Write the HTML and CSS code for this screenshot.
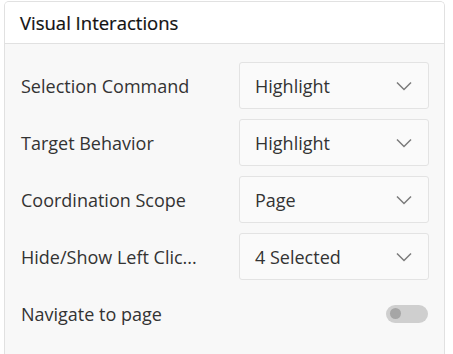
FILE: index.html
```html
<!DOCTYPE HTML>
<html lang="en-US">
<head>
    <title>Visual Interactions</title>
    <meta charset="UTF-8">
    <link rel="stylesheet" href="styles.css">
</head>
<body>
<div class="panel">
    <div class="panel-header">Visual Interactions</div>
    <div class="panel-body">
        <div class="row">
            <span class="label">Selection Command</span>
            <div class="select"><span>Highlight</span><svg class="chevron" viewBox="0 0 16 10"><path d="M1 1.5 L8 8.5 L15 1.5"/></svg></div>
        </div>
        <div class="row">
            <span class="label">Target Behavior</span>
            <div class="select"><span>Highlight</span><svg class="chevron" viewBox="0 0 16 10"><path d="M1 1.5 L8 8.5 L15 1.5"/></svg></div>
        </div>
        <div class="row">
            <span class="label">Coordination Scope</span>
            <div class="select"><span>Page</span><svg class="chevron" viewBox="0 0 16 10"><path d="M1 1.5 L8 8.5 L15 1.5"/></svg></div>
        </div>
        <div class="row">
            <span class="label">Hide/Show Left Clic...</span>
            <div class="select"><span>4 Selected</span><svg class="chevron" viewBox="0 0 16 10"><path d="M1 1.5 L8 8.5 L15 1.5"/></svg></div>
        </div>
        <div class="row row-toggle">
            <span class="label">Navigate to page</span>
            <div class="toggle"><div class="knob"></div></div>
        </div>
    </div>
</div>
</body>
</html>
```

FILE: styles.css
```css
* {
    box-sizing: border-box;
}

body {
    margin: 0;
    padding: 1px 8px 0 4px;
    background: #ffffff;
    font-family: "Open Sans", "Noto Sans", sans-serif;
    color: #333333;
}

.panel {
    width: 441px;
    height: 353px;
    border: 1px solid #e1e1e1;
    border-bottom: 0;
    border-radius: 5px 5px 0 0;
    overflow: hidden;
    background: #f8f8f8;
}

.panel-header {
    height: 42px;
    padding: 8px 15px 0;
    background: #ffffff;
    border-bottom: 1px solid #e1e1e1;
    font-size: 18.5px;
    color: #111111;
    -webkit-text-stroke: 0.2px #111111;
}

.panel-body {
    padding: 18px 15px 0 16px;
    display: flex;
    flex-direction: column;
    gap: 10px;
}

.row {
    display: flex;
    align-items: center;
    justify-content: space-between;
    height: 47px;
}

.label {
    font-size: 18px;
    white-space: nowrap;
}

.select {
    width: 190px;
    height: 47px;
    border: 1px solid #e3e3e3;
    border-radius: 3px;
    background: #fafafa;
    display: flex;
    align-items: center;
    justify-content: space-between;
    padding: 0 16px 0 15px;
    font-size: 18px;
}

.chevron {
    width: 16px;
    height: 10px;
    fill: none;
    stroke: #7a7a7a;
    stroke-width: 1.5;
}

.toggle {
    width: 42px;
    height: 18px;
    border-radius: 9px;
    background: #cfcfcf;
    display: flex;
    align-items: center;
    padding-left: 4px;
    margin-right: 1px;
}

.knob {
    width: 11px;
    height: 11px;
    border-radius: 50%;
    background: #a6a6a6;
}
```
